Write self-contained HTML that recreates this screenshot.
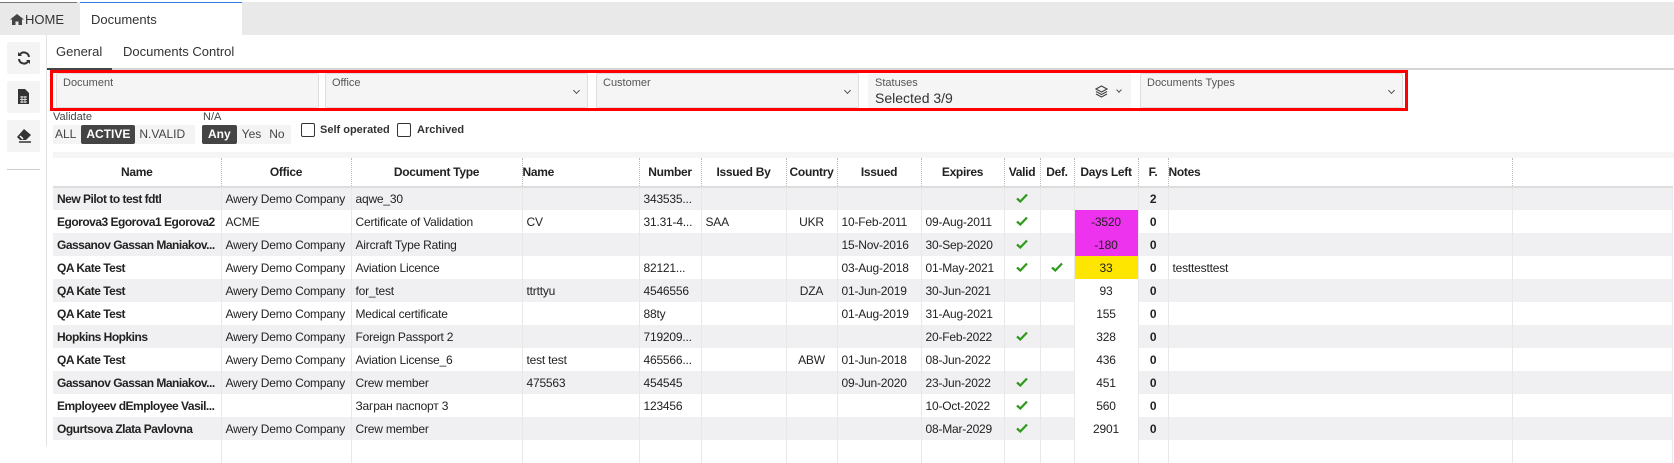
<!DOCTYPE html>
<html><head><meta charset="utf-8"><style>
*{box-sizing:border-box;margin:0;padding:0}
body{width:1674px;height:446px;background:#fff;font-family:"Liberation Sans","Noto Sans CJK SC",sans-serif;font-size:12px;color:#222;position:relative;overflow:hidden}
.a{position:absolute}
.btn{position:absolute;left:7px;width:33px;height:32px;background:#f4f4f4;border-radius:2px}
.fld{position:absolute;top:73px;height:35px;width:263px;background:#f5f5f5;border:1px solid #ddd;border-radius:2px}
.fld .l{position:absolute;left:6px;top:3px;font-size:11px;color:#555}
.fld .v{position:absolute;left:6px;top:16px;font-size:14px;color:#333}
.chev{position:absolute;right:8px;top:14px;width:5px;height:5px;border-right:1.3px solid #555;border-bottom:1.3px solid #555;transform:rotate(45deg)}
table{position:absolute;left:53px;top:158px;border-collapse:collapse;table-layout:fixed;width:1619px}
th{height:29px;font-weight:bold;font-size:12px;text-align:center;border-bottom:2px solid #ddd;background:#fff;position:relative;white-space:nowrap;letter-spacing:-0.3px}
th.s{border-right:1px dotted #bbb}
td{height:23px;padding:0 4px;white-space:nowrap;overflow:hidden;border-right:1px solid #e8e8e8;font-size:12px;letter-spacing:-0.2px}
tr.g td{background:#f0f0f2}
td.b{font-weight:bold;letter-spacing:-0.5px}
td.c{text-align:center}
td.w{background:#fff!important}
td.m{background:#ee33ee!important}
td.y{background:#ffe600!important}
.seg{position:absolute;top:125px;height:19px;background:#f4f4f4;font-size:12px;color:#444;line-height:19px;white-space:nowrap}
.seg span{display:inline-block;padding:0 4px}
.seg .on{background:#444;color:#fff;font-weight:bold;border-radius:2px}
.cb{position:absolute;top:123px;width:14px;height:14px;border:1px solid #333;border-radius:2px}
</style></head><body>
<svg width="0" height="0" style="position:absolute"><defs><symbol id="ck" viewBox="0 0 12 10"><path d="M1 5.5l3.3 3L11 1.5" stroke="#2e9a1a" stroke-width="2.2" fill="none"/></symbol></defs></svg>
<div class="a" style="left:0;top:2px;width:1674px;height:33px;background:#e9e9e9"></div>
<div class="a" style="left:0;top:2px;width:77px;height:1px;background:#777"></div>
<div class="a" style="left:10px;top:12px;font-size:13px;color:#333"><svg width="14" height="11" viewBox="0 0 14 11" style="vertical-align:-1px;margin-right:1px"><path d="M7 0L0 5.5h2V11h3.5V7.5h3V11H12V5.5h2z" fill="#444"/></svg>HOME</div>
<div class="a" style="left:80px;top:2px;width:162px;height:33px;background:#fff;border-top:1px solid #2f7fe8"></div>
<div class="a" style="left:91px;top:12px;font-size:13px;color:#333">Documents</div>

<div class="a" style="left:46px;top:35px;width:1px;height:411px;background:#e3e3e3"></div>
<div class="btn" style="top:42px"><svg class="a" style="left:10px;top:9px" width="14" height="14" viewBox="0 0 14 14"><path d="M12 6A5 5 0 0 0 3 3.5M2 8a5 5 0 0 0 9 2.5" stroke="#333" stroke-width="2" fill="none"/><path d="M1 1v4h4z" fill="#333"/><path d="M13 13V9H9z" fill="#333"/></svg></div>
<div class="btn" style="top:81px"><svg class="a" style="left:11px;top:8px" width="11" height="15" viewBox="0 0 11 15"><path d="M0 0h7l4 4v11H0z" fill="#333"/><path d="M2 8h7M2 10.5h7M2 13h7M4 7v7M7 7v7" stroke="#fff" stroke-width=".8"/></svg></div>
<div class="btn" style="top:120px"><svg class="a" style="left:9px;top:9px" width="16" height="14" viewBox="0 0 16 14"><path d="M8 0l7 6-5 5H4L1 8z" fill="#333"/><path d="M4 7l3 3" stroke="#fff" stroke-width="1.5"/><path d="M3 13h12" stroke="#333" stroke-width="1.5"/></svg></div>
<div class="a" style="left:7px;top:169px;width:33px;height:1px;background:#ccc"></div>

<div class="a" style="left:56px;top:44px;font-size:13px;color:#333">General</div>
<div class="a" style="left:123px;top:44px;font-size:13px;color:#333">Documents Control</div>
<div class="a" style="left:47px;top:68px;width:1627px;height:2px;background:#d5d5d5"></div>
<div class="a" style="left:47px;top:68px;width:65px;height:2px;background:#444"></div>

<div class="a" style="left:50px;top:70px;width:1358px;height:41px;border:3px solid #f00"></div>
<div class="fld" style="left:56px"><div class="l">Document</div></div>
<div class="fld" style="left:325px"><div class="l">Office</div><div class="chev"></div></div>
<div class="fld" style="left:596px"><div class="l">Customer</div><div class="chev"></div></div>
<div class="fld" style="left:868px;border-color:#f5f5f5"><div class="l">Statuses</div><div class="v">Selected 3/9</div>
<svg class="a" style="right:22px;top:11px" width="13" height="13" viewBox="0 0 13 13"><path d="M6.5 1L1 4l5.5 3L12 4z M1 6.5l5.5 3 5.5-3 M1 9l5.5 3L12 9" stroke="#444" stroke-width="1.2" fill="none"/></svg><div class="chev" style="right:9px;width:4px;height:4px"></div></div>
<div class="fld" style="left:1140px"><div class="l">Documents Types</div><div class="chev"></div></div>

<div class="a" style="left:53px;top:111px;font-size:11px;color:#444">Validate</div>
<div class="seg" style="left:53px;width:142px"><span style="padding:0 5px 0 2px">ALL</span><span class="on" style="padding:0 5px">ACTIVE</span><span>N.VALID</span></div>
<div class="a" style="left:203px;top:111px;font-size:11px;color:#444">N/A</div>
<div class="seg" style="left:202px;width:89px"><span class="on" style="padding:0 6px">Any</span><span style="padding:0 5px">Yes</span><span style="padding:0 3px">No</span></div>
<div class="cb" style="left:301px"></div><div class="a" style="left:320px;top:124px;font-weight:bold;font-size:11px;color:#333">Self operated</div>
<div class="cb" style="left:397px"></div><div class="a" style="left:417px;top:124px;font-weight:bold;font-size:11px;color:#333">Archived</div>

<div class="a" style="left:53px;top:152px;width:1621px;height:6px;background:#f5f5f5"></div>
<table>
<colgroup><col style="width:168px"><col style="width:130px"><col style="width:171px"><col style="width:117px"><col style="width:62px"><col style="width:85px"><col style="width:51px"><col style="width:84px"><col style="width:83px"><col style="width:36px"><col style="width:34px"><col style="width:64px"><col style="width:30px"><col style="width:344px"><col style="width:160px"></colgroup>
<tr><th class="s">Name</th><th class="s">Office</th><th class="s">Document Type</th><th class="s" style="text-align:left">Name</th><th class="s">Number</th><th class="s">Issued By</th><th class="s">Country</th><th class="s">Issued</th><th class="s">Expires</th><th class="s">Valid</th><th class="s">Def.</th><th class="s">Days Left</th><th class="s">F.</th><th class="s" style="text-align:left">Notes</th><th></th></tr>
<tr class="g"><td class="b">New Pilot to test fdtl</td><td>Awery Demo Company</td><td>aqwe_30</td><td></td><td>343535...</td><td></td><td></td><td></td><td></td><td class="c"><svg width="12" height="10"><use href="#ck"/></svg></td><td></td><td></td><td class="c b">2</td><td></td><td></td></tr>
<tr><td class="b">Egorova3 Egorova1 Egorova2</td><td>ACME</td><td>Certificate of Validation</td><td>CV</td><td>31.31-4...</td><td>SAA</td><td class="c">UKR</td><td>10-Feb-2011</td><td>09-Aug-2011</td><td class="c"><svg width="12" height="10"><use href="#ck"/></svg></td><td></td><td class="c m">-3520</td><td class="c b">0</td><td></td><td></td></tr>
<tr class="g"><td class="b">Gassanov Gassan Maniakov...</td><td>Awery Demo Company</td><td>Aircraft Type Rating</td><td></td><td></td><td></td><td></td><td>15-Nov-2016</td><td>30-Sep-2020</td><td class="c"><svg width="12" height="10"><use href="#ck"/></svg></td><td></td><td class="c m">-180</td><td class="c b">0</td><td></td><td></td></tr>
<tr><td class="b">QA Kate Test</td><td>Awery Demo Company</td><td>Aviation Licence</td><td></td><td>82121...</td><td></td><td></td><td>03-Aug-2018</td><td>01-May-2021</td><td class="c"><svg width="12" height="10"><use href="#ck"/></svg></td><td class="c"><svg width="12" height="10"><use href="#ck"/></svg></td><td class="c y">33</td><td class="c b">0</td><td>testtesttest</td><td></td></tr>
<tr class="g"><td class="b">QA Kate Test</td><td>Awery Demo Company</td><td>for_test</td><td>ttrttyu</td><td>4546556</td><td></td><td class="c">DZA</td><td>01-Jun-2019</td><td>30-Jun-2021</td><td></td><td></td><td class="c w">93</td><td class="c b">0</td><td></td><td></td></tr>
<tr><td class="b">QA Kate Test</td><td>Awery Demo Company</td><td>Medical certificate</td><td></td><td>88ty</td><td></td><td></td><td>01-Aug-2019</td><td>31-Aug-2021</td><td></td><td></td><td class="c w">155</td><td class="c b">0</td><td></td><td></td></tr>
<tr class="g"><td class="b">Hopkins Hopkins</td><td>Awery Demo Company</td><td>Foreign Passport 2</td><td></td><td>719209...</td><td></td><td></td><td></td><td>20-Feb-2022</td><td class="c"><svg width="12" height="10"><use href="#ck"/></svg></td><td></td><td class="c w">328</td><td class="c b">0</td><td></td><td></td></tr>
<tr><td class="b">QA Kate Test</td><td>Awery Demo Company</td><td>Aviation License_6</td><td>test test</td><td>465566...</td><td></td><td class="c">ABW</td><td>01-Jun-2018</td><td>08-Jun-2022</td><td></td><td></td><td class="c w">436</td><td class="c b">0</td><td></td><td></td></tr>
<tr class="g"><td class="b">Gassanov Gassan Maniakov...</td><td>Awery Demo Company</td><td>Crew member</td><td>475563</td><td>454545</td><td></td><td></td><td>09-Jun-2020</td><td>23-Jun-2022</td><td class="c"><svg width="12" height="10"><use href="#ck"/></svg></td><td></td><td class="c w">451</td><td class="c b">0</td><td></td><td></td></tr>
<tr><td class="b">Employeev dEmployee Vasil...</td><td></td><td>Загран паспорт 3</td><td></td><td>123456</td><td></td><td></td><td></td><td>10-Oct-2022</td><td class="c"><svg width="12" height="10"><use href="#ck"/></svg></td><td></td><td class="c w">560</td><td class="c b">0</td><td></td><td></td></tr>
<tr class="g"><td class="b">Ogurtsova Zlata Pavlovna</td><td>Awery Demo Company</td><td>Crew member</td><td></td><td></td><td></td><td></td><td></td><td>08-Mar-2029</td><td class="c"><svg width="12" height="10"><use href="#ck"/></svg></td><td></td><td class="c w">2901</td><td class="c b">0</td><td></td><td></td></tr>
<tr><td></td><td></td><td></td><td></td><td></td><td></td><td></td><td></td><td></td><td></td><td></td><td></td><td></td><td></td><td></td></tr>
</table>
</body></html>
